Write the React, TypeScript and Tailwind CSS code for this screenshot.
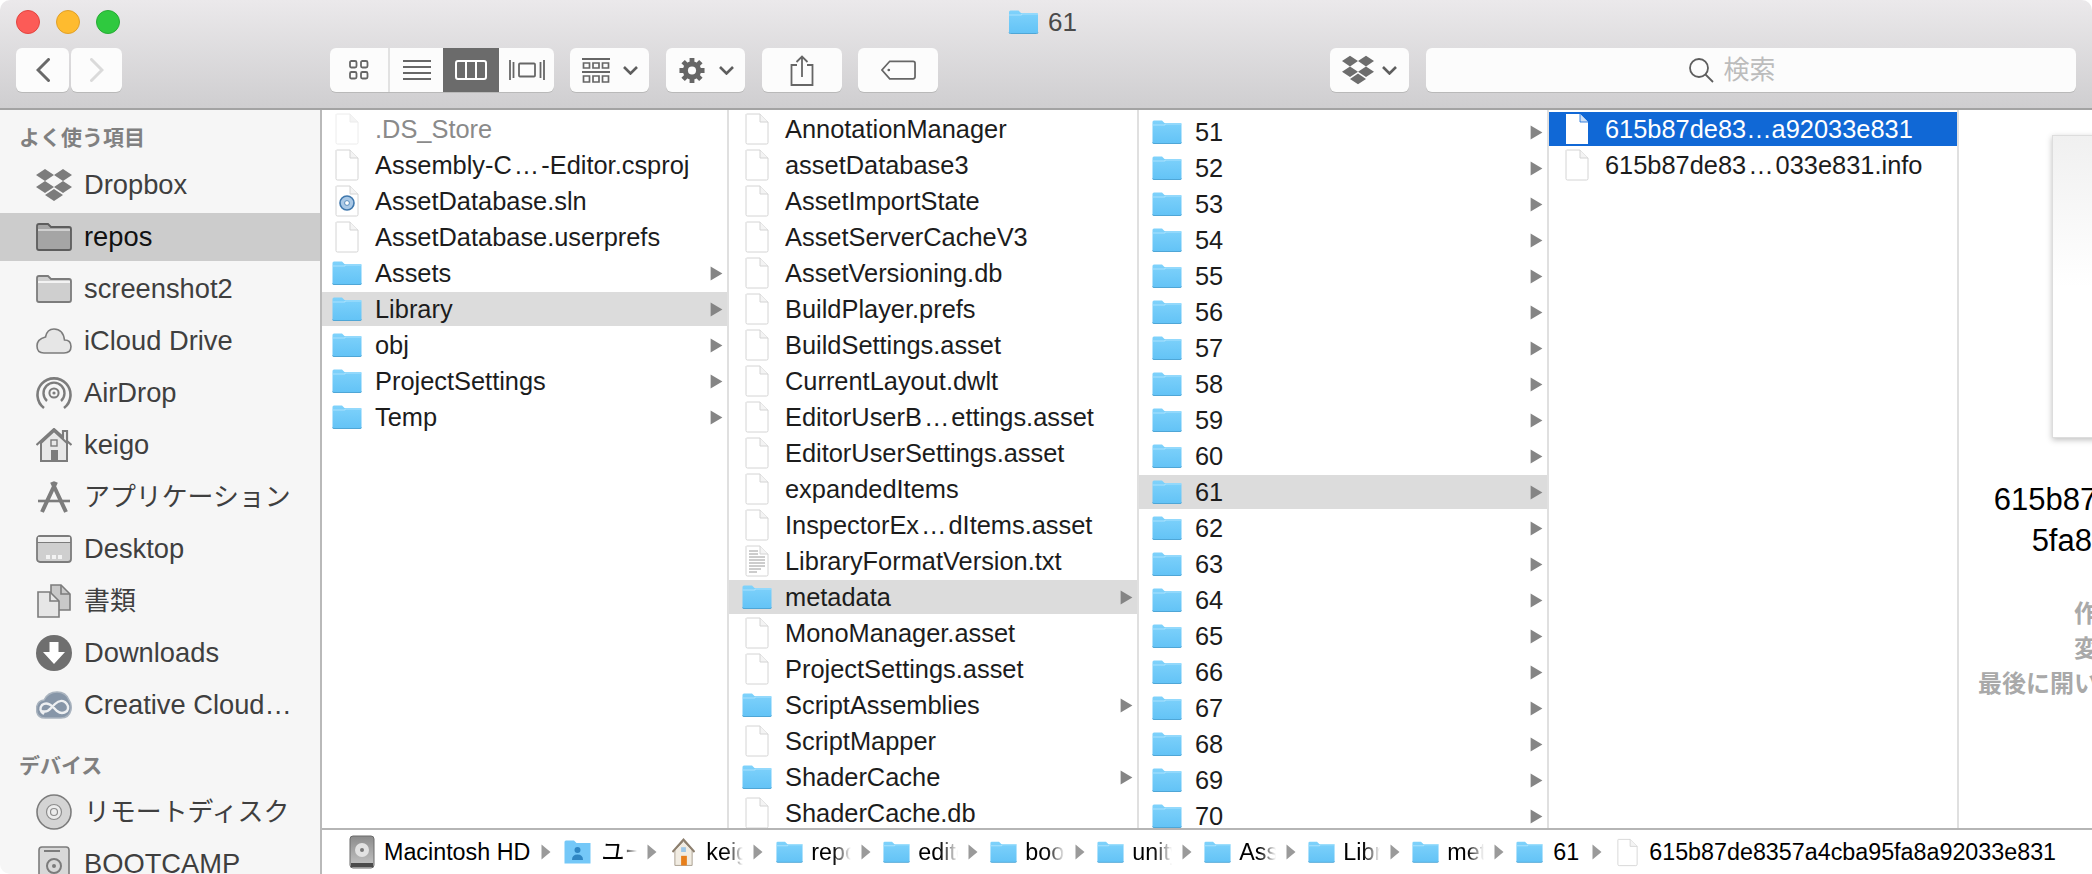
import type { FC, ReactNode } from 'react';

const FONT = "font-['Liberation_Sans','Noto_Sans_CJK_JP',sans-serif]";

// Finder's blue folder
const Folder: FC<{ className?: string }> = ({ className = 'w-[30px] h-[24px]' }) => (
  <svg viewBox="0 0 30 24" className={`shrink-0 ${className}`}>
    <defs>
      <linearGradient id="fold" x1="0" y1="0" x2="0" y2="1">
        <stop offset="0" stopColor="#7fd2fb" />
        <stop offset="1" stopColor="#63c3f6" />
      </linearGradient>
    </defs>
    <path d="M0.5 2 Q0.5 0.5 2 0.5 H10 L12.5 3 H28.5 Q29.5 3 29.5 4 V22 Q29.5 23.5 28 23.5 H2 Q0.5 23.5 0.5 22 Z" fill="url(#fold)" />
    <path d="M0.5 5 H12.5 L13.5 4 H29.5" stroke="#a9e2fd" strokeWidth="1.2" fill="none" />
    <path d="M0.5 22.5 Q0.5 23.5 2 23.5 H28 Q29.5 23.5 29.5 22.5" stroke="#4fa6d6" strokeWidth="1" fill="none" />
  </svg>
);

const FileIcon: FC<{ faded?: boolean; className?: string; children?: ReactNode }> = ({ faded, className = 'w-[24px] h-[32px]', children }) => (
  <svg viewBox="0 0 24 32" className={`shrink-0 ${className}`}>
    <path d="M1.5 1 H15 L23 9 V29.5 Q23 31 21.5 31 H2.5 Q1 31 1 29.5 V1.5 Z" fill="#fff" stroke={faded ? '#ececec' : '#d4d4d4'} strokeWidth="1" />
    <path d="M15 1 V9 H23" fill="#f4f4f4" stroke={faded ? '#ececec' : '#d4d4d4'} strokeWidth="1" />
    {children}
  </svg>
);

const Chevron = () => (
  <svg viewBox="0 0 12 14" className="w-[13px] h-[15px] shrink-0">
    <path d="M0.5 0.5 L11.5 7 L0.5 13.5 Z" fill="#858585" />
  </svg>
);

const SmallChev = () => (
  <svg viewBox="0 0 15 9" className="w-[15px] h-[9px] shrink-0">
    <path d="M1 1 L7.5 7.5 L14 1" fill="none" stroke="#5e5e5e" strokeWidth="2.6" />
  </svg>
);

const DropboxGlyph: FC<{ className?: string; fill?: string }> = ({ className = '', fill = '#6d6d6d' }) => (
  <svg viewBox="0 0 36 32" className={className}>
    <path d="M9 0 L18 6 L9 12 L0 6 Z M27 0 L36 6 L27 12 L18 6 Z M9 12 L18 18 L9 24 L0 18 Z M27 12 L36 18 L27 24 L18 18 Z M18 20 L27 26 L18 32 L9 26 Z" fill={fill} />
  </svg>
);

// toolbar button wrapper
const ToolBtn: FC<{ className: string; children: ReactNode }> = ({ className, children }) => (
  <div className={`h-[44px] bg-[#fcfcfc] rounded-[6px] shadow-[0_1px_0_#b9b9b9] flex items-center justify-center shrink-0 ${className}`}>{children}</div>
);

const Toolbar = () => (
  <div className={`h-[110px] shrink-0 border-b-2 border-[#a3a3a3] rounded-t-[10px] bg-gradient-to-b from-[#ebe9eb] to-[#cfced0] flex flex-col ${FONT}`}>
    <div className="h-[48px] flex items-center pl-[16px] pb-[4px] relative">
      <div className="flex gap-[16px]">
        <div className="w-[24px] h-[24px] rounded-full bg-[#fc5b57] border border-[#e3443f]" />
        <div className="w-[24px] h-[24px] rounded-full bg-[#febb2f] border border-[#e1a028]" />
        <div className="w-[24px] h-[24px] rounded-full bg-[#2fc93f] border border-[#27ab35]" />
      </div>
      <div className="absolute left-[1008px] top-[10px] flex items-center gap-[9px]">
        <Folder className="w-[31px] h-[24px]" />
        <span className="text-[26px] leading-[24px] text-[#4a4a4a]">61</span>
      </div>
    </div>
    <div className="flex items-start pl-[16px]">
      <ToolBtn className="w-[53px]">
        <svg viewBox="0 0 14 24" className="w-[14px] h-[24px]"><path d="M12.5 1.5 L2 12 L12.5 22.5" fill="none" stroke="#696969" strokeWidth="3" strokeLinecap="round" /></svg>
      </ToolBtn>
      <ToolBtn className="w-[51px] ml-[2px]">
        <svg viewBox="0 0 14 24" className="w-[14px] h-[24px]"><path d="M1.5 1.5 L12 12 L1.5 22.5" fill="none" stroke="#dadada" strokeWidth="3" strokeLinecap="round" /></svg>
      </ToolBtn>
      <div className="ml-[208px] h-[44px] w-[224px] bg-[#fcfcfc] rounded-[6px] shadow-[0_1px_0_#b9b9b9] flex overflow-hidden shrink-0">
        <div className="w-[60px] border-r-2 border-[#e2e2e2] flex items-center justify-center">
          <svg viewBox="0 0 20 20" className="w-[20px] h-[20px]" fill="none" stroke="#666" strokeWidth="1.8">
            <rect x="1" y="1" width="6.5" height="6.5" rx="1.5" /><rect x="12" y="1" width="6.5" height="6.5" rx="1.5" />
            <rect x="1" y="12" width="6.5" height="6.5" rx="1.5" /><rect x="12" y="12" width="6.5" height="6.5" rx="1.5" />
          </svg>
        </div>
        <div className="w-[53px] flex items-center justify-center">
          <svg viewBox="0 0 28 20" className="w-[28px] h-[20px]" stroke="#666" strokeWidth="2"><path d="M0 1 H28 M0 7 H28 M0 13 H28 M0 19 H28" /></svg>
        </div>
        <div className="w-[56px] bg-[#6b6b6b] flex items-center justify-center">
          <svg viewBox="0 0 32 20" className="w-[32px] h-[20px]" fill="none" stroke="#fff" strokeWidth="2">
            <rect x="1" y="1" width="30" height="18" rx="2" /><path d="M11 1 V19 M21 1 V19" />
          </svg>
        </div>
        <div className="w-[55px] flex items-center justify-center">
          <svg viewBox="0 0 36 20" className="w-[36px] h-[20px]" fill="none" stroke="#666" strokeWidth="1.8">
            <rect x="10" y="3.5" width="16" height="13" rx="1" /><path d="M1 0 V20 M4.5 2 V18 M35 0 V20 M31.5 2 V18" />
          </svg>
        </div>
      </div>
      <ToolBtn className="w-[79px] ml-[16px] gap-[13px]">
        <svg viewBox="0 0 28 25" className="w-[28px] h-[25px]" stroke="#666" fill="none" strokeWidth="2">
          <path d="M0 1 H28 M0 14 H28" />
          <path strokeWidth="1.7" d="M1.5 5 H7.5 V10 H1.5 Z M11 5 H17 V10 H11 Z M20.5 5 H26.5 V10 H20.5 Z M1.5 18 H7.5 V24 H1.5 Z M11 18 H17 V24 H11 Z M20.5 18 H26.5 V24 H20.5 Z" />
        </svg>
        <SmallChev />
      </ToolBtn>
      <ToolBtn className="w-[79px] ml-[17px] gap-[13px]">
        <svg viewBox="0 0 28 28" className="w-[28px] h-[27px]">
          <circle cx="14" cy="14" r="9.5" fill="#666" />
          <path d="M14 1 V27 M1 14 H27 M4.8 4.8 L23.2 23.2 M23.2 4.8 L4.8 23.2" stroke="#666" strokeWidth="5" />
          <circle cx="14" cy="14" r="4.2" fill="#fcfcfc" />
        </svg>
        <SmallChev />
      </ToolBtn>
      <ToolBtn className="w-[80px] ml-[17px]">
        <svg viewBox="0 0 24 31" className="w-[24px] h-[31px]" fill="none" stroke="#666" strokeWidth="1.8">
          <path d="M7 10 H1.5 V30 H22.5 V10 H17 M12 22 V1.5 M6.5 7 L12 1.5 L17.5 7" />
        </svg>
      </ToolBtn>
      <ToolBtn className="w-[80px] ml-[16px]">
        <svg viewBox="0 0 36 20" className="w-[35px] h-[20px]" fill="none" stroke="#666" strokeWidth="1.8">
          <path d="M9 1 H33 Q35 1 35 3 V17 Q35 19 33 19 H9 L1 10 Z" /><circle cx="8" cy="10" r="1.4" fill="#666" stroke="none" />
        </svg>
      </ToolBtn>
      <ToolBtn className="w-[79px] ml-[392px] gap-[8px]">
        <DropboxGlyph className="w-[32px] h-[36px]" />
        <SmallChev />
      </ToolBtn>
      <ToolBtn className="w-[650px] ml-[17px] gap-[9px] pr-[38px]">
        <svg viewBox="0 0 26 26" className="w-[26px] h-[26px]" fill="none" stroke="#5e5e5e" strokeWidth="1.8">
          <circle cx="11" cy="11" r="9" /><path d="M17.5 17.5 L25 25" />
        </svg>
        <span className="text-[26px] text-[#bcbcbc]">検索</span>
      </ToolBtn>
    </div>
  </div>
);

const folderIcon = (dark?: boolean) => (
  <svg viewBox="0 0 36 28" className="w-[36px] h-[28px]">
    <path d="M1 3 Q1 1 3 1 H12 L15 4 H33 Q35 4 35 6 V25 Q35 27 33 27 H3 Q1 27 1 25 Z" fill={dark ? '#a5a5a5' : '#cfcfcf'} stroke={dark ? '#5d5d5d' : '#7c7c7c'} strokeWidth="1.8" />
    <path d="M1 7 H35" stroke={dark ? '#5d5d5d' : '#7c7c7c'} strokeWidth="1.4" />
    <path d="M2 6 H34 V8 H2 Z" fill={dark ? '#d0d0d0' : '#f3f3f3'} />
  </svg>
);

const sideIcons: Record<string, ReactNode> = {
  dropbox: <DropboxGlyph className="w-[36px] h-[32px]" fill="#7c7c7c" />,
  repos: folderIcon(true),
  folder: folderIcon(),
  cloud: (
    <svg viewBox="0 0 36 26" className="w-[36px] h-[26px]">
      <path d="M8 25 H28 Q35 25 35 18.5 Q35 12 28.5 12 Q27 1 18 1 Q11 1 9.5 9 Q1 11 1 18 Q1 25 8 25 Z" fill="#e6e6e6" stroke="#7c7c7c" strokeWidth="1.6" />
    </svg>
  ),
  airdrop: (
    <svg viewBox="0 0 36 36" className="w-[36px] h-[36px]" fill="none" stroke="#7c7c7c">
      <path strokeWidth="2.6" d="M8 33 A16.5 16.5 0 1 1 28 33" />
      <path strokeWidth="2.4" d="M11 26 A10.5 10.5 0 1 1 25 26" />
      <circle cx="18" cy="18" r="4.6" strokeWidth="2" /><circle cx="18" cy="18" r="1.6" fill="#7c7c7c" stroke="none" />
    </svg>
  ),
  home: (
    <svg viewBox="0 0 36 34" className="w-[36px] h-[34px]">
      <path d="M5 15 V33 H31 V15 L18 3 Z" fill="#e8e8e8" stroke="#7c7c7c" strokeWidth="2" />
      <path d="M0.5 17 L18 1 L27 9 V3 H31 V13 L35.5 17" fill="none" stroke="#7c7c7c" strokeWidth="2.2" />
      <rect x="15" y="22" width="7" height="11" fill="#7c7c7c" /><rect x="15" y="12" width="6" height="6" fill="none" stroke="#7c7c7c" strokeWidth="1.4" />
    </svg>
  ),
  apps: (
    <svg viewBox="0 0 36 34" className="w-[36px] h-[34px]" stroke="#7c7c7c" fill="none">
      <path strokeWidth="4" d="M20 2 L6 32 M16 2 L30 32" />
      <path strokeWidth="2.6" d="M2 21 H34" />
    </svg>
  ),
  desktop: (
    <svg viewBox="0 0 36 28" className="w-[36px] h-[28px]">
      <rect x="1" y="1" width="34" height="26" rx="3" fill="#cfcfcf" stroke="#7c7c7c" strokeWidth="1.8" />
      <path d="M2 2 H34 V7 H2 Z" fill="#efefef" /><path d="M1 7.5 H35" stroke="#7c7c7c" strokeWidth="1.2" />
      <path d="M10 20 H14 V24 H10 Z M16 20 H20 V24 H16 Z M22 20 H26 V24 H22 Z" fill="#f3f3f3" />
    </svg>
  ),
  docs: (
    <svg viewBox="0 0 34 34" className="w-[34px] h-[34px]" stroke="#7c7c7c" strokeWidth="1.6">
      <path d="M14 1 H24 L33 10 V26 H14 Z" fill="#c9c9c9" /><path d="M1 8 H13 L22 17 V33 H1 Z" fill="#e6e6e6" />
      <path d="M13 8 V17 H22 M24 1 V10 H33" fill="none" />
    </svg>
  ),
  downloads: (
    <svg viewBox="0 0 36 36" className="w-[36px] h-[36px]">
      <circle cx="18" cy="18" r="18" fill="#6f6f6f" /><path d="M13.5 7 H22.5 V17 H29 L18 29 L7 17 H13.5 Z" fill="#fff" />
    </svg>
  ),
  creative: (
    <svg viewBox="0 0 36 28" className="w-[36px] h-[28px]">
      <path d="M9 27 Q0.5 27 0.5 18 Q0.5 10 8 9 Q12 1 21 1 Q30 1 33 9 Q36 13 35 19 Q33 27 25 27 Z" fill="#8796a8" stroke="#aab4bf" strokeWidth="1.5" />
      <path d="M8 23 Q2 19 6 14 Q11 10 17 16 L21 20 Q26 24 31 20 Q34 15 29 11 Q24 8 19 13 L15 17 Q11 22 6 20" fill="none" stroke="#eef0f2" strokeWidth="2.4" />
    </svg>
  ),
  disc: (
    <svg viewBox="0 0 36 36" className="w-[36px] h-[36px]" fill="none">
      <circle cx="18" cy="18" r="17" fill="#d4d4d4" stroke="#7c7c7c" strokeWidth="1.6" />
      <circle cx="18" cy="18" r="7.5" fill="#ececec" stroke="#8c8c8c" strokeWidth="1.2" /><circle cx="18" cy="18" r="3.5" stroke="#8c8c8c" strokeWidth="1.2" />
    </svg>
  ),
  drive: (
    <svg viewBox="0 0 32 36" className="w-[32px] h-[36px]" fill="none">
      <rect x="1" y="1" width="30" height="34" rx="3" fill="#d8d8d8" stroke="#7c7c7c" strokeWidth="1.6" />
      <path d="M6 5 H22" stroke="#7c7c7c" strokeWidth="2" /><circle cx="16" cy="20" r="7" stroke="#7c7c7c" strokeWidth="2" /><circle cx="16" cy="20" r="2" fill="#7c7c7c" />
    </svg>
  ),
};

type SideRow = { label: string; icon: string; active?: boolean; cjk?: boolean };

const favourites: SideRow[] = [
  { label: 'Dropbox', icon: 'dropbox' },
  { label: 'repos', icon: 'repos', active: true },
  { label: 'screenshot2', icon: 'folder' },
  { label: 'iCloud Drive', icon: 'cloud' },
  { label: 'AirDrop', icon: 'airdrop' },
  { label: 'keigo', icon: 'home' },
  { label: 'アプリケーション', icon: 'apps', cjk: true },
  { label: 'Desktop', icon: 'desktop' },
  { label: '書類', icon: 'docs', cjk: true },
  { label: 'Downloads', icon: 'downloads' },
  { label: 'Creative Cloud…', icon: 'creative' },
];

const SideItem: FC<SideRow> = ({ label, icon, active, cjk }) => (
  <div className={`flex items-center shrink-0 pl-[36px] ${active ? 'h-[48px] my-[2px] bg-[#cccccc] text-[#111]' : 'h-[52px] text-[#3f3f3f]'}`}>
    <div className="w-[36px] flex justify-center shrink-0">{sideIcons[icon]}</div>
    <span className={`ml-[12px] whitespace-nowrap ${cjk ? 'text-[25.9px]' : 'text-[27.3px]'}`}>{label}</span>
  </div>
);

const Sidebar = () => (
  <div className={`w-[322px] shrink-0 h-[764px] bg-[#f6f6f6] border-r-2 border-[#b9b9b9] rounded-bl-[10px] overflow-hidden flex flex-col ${FONT}`}>
    <div className="h-[22px] mt-[17px] pl-[19px] text-[21px] leading-[22px] font-bold text-[#808080] shrink-0">よく使う項目</div>
    <div className="flex flex-col mt-[10px]">
      {favourites.map((r) => <SideItem key={r.label} {...r} />)}
    </div>
    <div className="h-[22px] mt-[24px] pl-[19px] text-[21px] leading-[22px] font-bold text-[#808080] shrink-0">デバイス</div>
    <div className="flex flex-col mt-[9px]">
      <SideItem label="リモートディスク" icon="disc" cjk />
      <SideItem label="BOOTCAMP" icon="drive" />
    </div>
  </div>
);

type Entry = { name: string; kind: 'file' | 'folder' | 'sln' | 'txt'; selected?: boolean; dim?: boolean };

const f = (name: string, dim?: boolean): Entry => ({ name, kind: 'file', dim });
const d = (name: string, selected?: boolean): Entry => ({ name, kind: 'folder', selected });

const col1: Entry[] = [
  f('.DS_Store', true),
  f('Assembly-C…-Editor.csproj'),
  { name: 'AssetDatabase.sln', kind: 'sln' },
  f('AssetDatabase.userprefs'),
  d('Assets'),
  d('Library', true),
  d('obj'),
  d('ProjectSettings'),
  d('Temp'),
];

const col2: Entry[] = [
  f('AnnotationManager'),
  f('assetDatabase3'),
  f('AssetImportState'),
  f('AssetServerCacheV3'),
  f('AssetVersioning.db'),
  f('BuildPlayer.prefs'),
  f('BuildSettings.asset'),
  f('CurrentLayout.dwlt'),
  f('EditorUserB…ettings.asset'),
  f('EditorUserSettings.asset'),
  f('expandedItems'),
  f('InspectorEx…dItems.asset'),
  { name: 'LibraryFormatVersion.txt', kind: 'txt' },
  d('metadata', true),
  f('MonoManager.asset'),
  f('ProjectSettings.asset'),
  d('ScriptAssemblies'),
  f('ScriptMapper'),
  d('ShaderCache'),
  f('ShaderCache.db'),
];

const col3: Entry[] = Array.from({ length: 20 }, (_, i) => d(String(51 + i), 51 + i === 61));

const EntryIcon: FC<{ kind: Entry['kind']; dim?: boolean }> = ({ kind, dim }) => {
  if (kind === 'folder') return <Folder />;
  if (kind === 'sln') {
    return (
      <FileIcon>
        <circle cx="12" cy="18" r="7" fill="#a9c8e6" stroke="#3f78ad" strokeWidth="1.6" />
        <circle cx="12" cy="18" r="2.4" fill="#fff" stroke="#3f78ad" strokeWidth="0.8" />
      </FileIcon>
    );
  }
  if (kind === 'txt') {
    return (
      <FileIcon>
        <path d="M4 6 H13 M4 9 H13 M4 12 H20 M4 15 H20 M4 18 H20 M4 21 H20 M4 24 H16 M4 27 H12" stroke="#9a9a9a" strokeWidth="1" />
      </FileIcon>
    );
  }
  return <FileIcon faded={dim} />;
};

// ellipsis is wider in the original font
const FileName: FC<{ name: string }> = ({ name }) => {
  const [head, tail] = name.split('…');
  if (tail === undefined) return <>{name}</>;
  return (
    <>
      {head}
      <span className="mx-[2px]">…</span>
      {tail}
    </>
  );
};

const Row: FC<{ entry: Entry; indent?: boolean }> = ({ entry, indent }) => (
  <div className={`h-[34px] mb-[2px] shrink-0 flex items-center pr-[4px] ${entry.selected ? 'bg-[#dcdcdc]' : ''}`}>
    <div className={`w-[30px] flex justify-center shrink-0 ${indent ? 'ml-[13px]' : 'ml-[10px]'}`}><EntryIcon kind={entry.kind} dim={entry.dim} /></div>
    <span className={`ml-[13px] text-[25.4px] whitespace-nowrap ${entry.dim ? 'text-[#8a8a8a]' : 'text-[#1c1c1c]'}`}><FileName name={entry.name} /></span>
    {entry.kind === 'folder' && <div className="ml-auto"><Chevron /></div>}
  </div>
);

const Column: FC<{ entries: Entry[]; className: string; indent?: boolean }> = ({ entries, className, indent }) => (
  <div className={`shrink-0 h-full overflow-hidden border-r-2 border-[#e0e0e0] flex flex-col ${className}`}>
    {entries.map((e) => <Row key={e.name} entry={e} indent={indent} />)}
  </div>
);

const SelectedFileRow = () => (
  <div className="h-[34px] mb-[2px] flex items-center bg-[#1068d6]">
    <div className="w-[30px] ml-[13px] flex justify-center shrink-0">
      <svg viewBox="0 0 24 32" className="w-[24px] h-[32px]">
        <path d="M1 1 H15 L23 9 V31 H1 Z" fill="#fff" />
        <path d="M15 1 V9 H23" fill="#cfe0f5" stroke="#1068d6" strokeWidth="0.8" />
      </svg>
    </div>
    <span className="ml-[13px] text-[25.4px] whitespace-nowrap text-white">615b87de83…a92033e831</span>
  </div>
);

const Preview = () => (
  <div className={`flex-1 min-w-0 h-full overflow-hidden bg-white pl-[93px] pt-[25px] ${FONT}`}>
    <div className="w-[234px] h-[303px] bg-gradient-to-b from-[#f0f0f0] via-white to-white border border-[#dddddd] shadow-[0_2px_6px_rgba(0,0,0,0.25)]" />
    <div className="w-[378px] -ml-[93px] mt-[41px] flex flex-col items-center text-[31px] leading-[41px] text-black whitespace-nowrap">
      <span>615b87de8357a4cba9</span>
      <span>5fa8a92033e831</span>
    </div>
    <div className="w-[168px] -ml-[74px] mt-[35px] flex flex-col text-right text-[24px] leading-[35px] font-bold text-[#a9a9a9] whitespace-nowrap">
      <span>作成日</span>
      <span>変更日</span>
      <span>最後に開いた日</span>
    </div>
  </div>
);

const Arrow = () => (
  <svg viewBox="0 0 10 16" className="w-[10px] h-[16px] shrink-0"><path d="M0.5 0.5 L9.5 8 L0.5 15.5 Z" fill="#9a9a9a" /></svg>
);

const PathFolder = ({ label, wide }: { label: string; wide?: boolean }) => (
  <div className="flex items-center shrink-0">
    <Folder className="w-[27px] h-[22px]" />
    <span className={`ml-[8px] overflow-hidden whitespace-nowrap [mask-image:linear-gradient(to_right,black_55%,transparent)] ${wide ? 'w-[37px]' : 'w-[40px]'}`}>{label}</span>
    <div className="ml-[10px] mr-[12px]"><Arrow /></div>
  </div>
);

const PathBar = () => (
  <div className={`h-[46px] shrink-0 border-t-2 border-[#b5b5b5] bg-white flex items-center pl-[27px] text-[23.3px] text-black whitespace-nowrap ${FONT}`}>
    <svg viewBox="0 0 26 34" className="w-[26px] h-[34px] shrink-0">
      <defs>
        <linearGradient id="hd" x1="0" y1="0" x2="0" y2="1"><stop offset="0" stopColor="#8b8b8b" /><stop offset="1" stopColor="#c7c7c7" /></linearGradient>
      </defs>
      <rect x="1" y="1" width="24" height="32" rx="3" fill="url(#hd)" stroke="#6a6a6a" />
      <circle cx="13" cy="15" r="7" fill="#e2e2e2" /><circle cx="13" cy="15" r="2" fill="#777" />
      <rect x="2" y="28" width="22" height="4" fill="#4b4b4b" />
    </svg>
    <span className="ml-[9px]">Macintosh HD</span>
    <div className="ml-[11px] mr-[13px]"><Arrow /></div>
    <svg viewBox="0 0 27 24" className="w-[27px] h-[24px] shrink-0">
      <path d="M0.5 2 Q0.5 0.5 2 0.5 H10 L12.5 3 H26.5 V23.5 H0.5 Z" fill="#74c8f8" />
      <circle cx="13.5" cy="10" r="3" fill="#2f86c3" /><path d="M8 20 Q8 14.5 13.5 14.5 Q19 14.5 19 20 Z" fill="#2f86c3" />
    </svg>
    <span className="ml-[10px] w-[36px] overflow-hidden [mask-image:linear-gradient(to_right,black_55%,transparent)]">ユーザ</span>
    <div className="ml-[10px] mr-[15px]"><Arrow /></div>
    <svg viewBox="0 0 24 30" className="w-[23px] h-[30px] shrink-0">
      <path d="M3 13 V29 H21 V13 L12 4 Z" fill="#f1ece2" stroke="#a99f90" />
      <path d="M0.5 15 L12 2 L23.5 15" fill="none" stroke="#8c7f6e" strokeWidth="2" />
      <rect x="9.5" y="19" width="6" height="10" fill="#e77f1c" /><rect x="9.5" y="10" width="5" height="5" fill="#9cc7e8" />
    </svg>
    <span className="ml-[11px] w-[37px] overflow-hidden [mask-image:linear-gradient(to_right,black_55%,transparent)]">keigo</span>
    <div className="ml-[10px] mr-[13px]"><Arrow /></div>
    <PathFolder label="repos" />
    <PathFolder label="editor" />
    <PathFolder label="book" />
    <PathFolder label="unity" />
    <PathFolder label="Assets" wide />
    <PathFolder label="Library" wide />
    <PathFolder label="metadata" wide />
    <Folder className="w-[27px] h-[22px]" />
    <span className="ml-[10px]">61</span>
    <div className="ml-[13px] mr-[15px]"><Arrow /></div>
    <FileIcon className="w-[21px] h-[29px]" />
    <span className="ml-[11px]">615b87de8357a4cba95fa8a92033e831</span>
  </div>
);

export default function App() {
  return (
    <div className={`w-[2092px] h-[874px] overflow-hidden bg-white flex flex-col ${FONT}`}>
      <Toolbar />
      <div className="flex h-[764px]">
        <Sidebar />
        <div className="flex-1 min-w-0 flex flex-col h-full">
          <div className="h-[718px] flex">
            <Column entries={col1} className="w-[407px] pt-[2px]" />
            <Column entries={col2} className="w-[410px] pt-[2px]" indent />
            <Column entries={col3} className="w-[410px] pt-[5px]" indent />
            <div className="w-[410px] shrink-0 h-full overflow-hidden border-r-2 border-[#e0e0e0] pt-[2px] flex flex-col">
              <SelectedFileRow />
              <Row entry={f('615b87de83…033e831.info')} indent />
            </div>
            <Preview />
          </div>
          <PathBar />
        </div>
      </div>
    </div>
  );
}
